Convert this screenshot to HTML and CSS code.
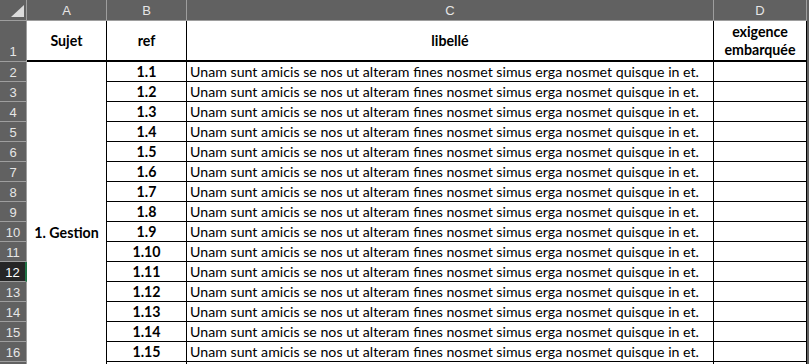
FILE: index.html
```html
<!DOCTYPE html>
<html lang="fr">
<head>
    <meta charset="UTF-8">
    <title>Exigences</title>
    <link rel="stylesheet" href="styles.css">
</head>
<body>
    <div class="sheet">
        <!-- column headers -->
        <div class="hd corner"><span class="tri"></span></div>
        <div class="hd col">A</div>
        <div class="hd col">B</div>
        <div class="hd col">C</div>
        <div class="hd col">D</div>
        <div class="hd edge"></div>

        <!-- row 1 -->
        <div class="hd row first">1</div>
        <div class="cell title a">Sujet</div>
        <div class="cell title">ref</div>
        <div class="cell title">libellé</div>
        <div class="cell title">exigence<br>embarquée</div>
        <div class="hd edge"></div>

        <!-- merged subject -->
        <div class="cell subject">1. Gestion</div>

        <div class="hd row" style="grid-row: 3">2</div><div class="cell ref" style="grid-row: 3">1.1</div><div class="cell txt" style="grid-row: 3">Unam sunt amicis se nos ut alteram fines nosmet simus erga nosmet quisque in et.</div><div class="cell" style="grid-row: 3"></div><div class="hd edge" style="grid-row: 3"></div>
        <div class="hd row" style="grid-row: 4">3</div><div class="cell ref" style="grid-row: 4">1.2</div><div class="cell txt" style="grid-row: 4">Unam sunt amicis se nos ut alteram fines nosmet simus erga nosmet quisque in et.</div><div class="cell" style="grid-row: 4"></div><div class="hd edge" style="grid-row: 4"></div>
        <div class="hd row" style="grid-row: 5">4</div><div class="cell ref" style="grid-row: 5">1.3</div><div class="cell txt" style="grid-row: 5">Unam sunt amicis se nos ut alteram fines nosmet simus erga nosmet quisque in et.</div><div class="cell" style="grid-row: 5"></div><div class="hd edge" style="grid-row: 5"></div>
        <div class="hd row" style="grid-row: 6">5</div><div class="cell ref" style="grid-row: 6">1.4</div><div class="cell txt" style="grid-row: 6">Unam sunt amicis se nos ut alteram fines nosmet simus erga nosmet quisque in et.</div><div class="cell" style="grid-row: 6"></div><div class="hd edge" style="grid-row: 6"></div>
        <div class="hd row" style="grid-row: 7">6</div><div class="cell ref" style="grid-row: 7">1.5</div><div class="cell txt" style="grid-row: 7">Unam sunt amicis se nos ut alteram fines nosmet simus erga nosmet quisque in et.</div><div class="cell" style="grid-row: 7"></div><div class="hd edge" style="grid-row: 7"></div>
        <div class="hd row" style="grid-row: 8">7</div><div class="cell ref" style="grid-row: 8">1.6</div><div class="cell txt" style="grid-row: 8">Unam sunt amicis se nos ut alteram fines nosmet simus erga nosmet quisque in et.</div><div class="cell" style="grid-row: 8"></div><div class="hd edge" style="grid-row: 8"></div>
        <div class="hd row" style="grid-row: 9">8</div><div class="cell ref" style="grid-row: 9">1.7</div><div class="cell txt" style="grid-row: 9">Unam sunt amicis se nos ut alteram fines nosmet simus erga nosmet quisque in et.</div><div class="cell" style="grid-row: 9"></div><div class="hd edge" style="grid-row: 9"></div>
        <div class="hd row" style="grid-row: 10">9</div><div class="cell ref" style="grid-row: 10">1.8</div><div class="cell txt" style="grid-row: 10">Unam sunt amicis se nos ut alteram fines nosmet simus erga nosmet quisque in et.</div><div class="cell" style="grid-row: 10"></div><div class="hd edge" style="grid-row: 10"></div>
        <div class="hd row" style="grid-row: 11">10</div><div class="cell ref" style="grid-row: 11">1.9</div><div class="cell txt" style="grid-row: 11">Unam sunt amicis se nos ut alteram fines nosmet simus erga nosmet quisque in et.</div><div class="cell" style="grid-row: 11"></div><div class="hd edge" style="grid-row: 11"></div>
        <div class="hd row" style="grid-row: 12">11</div><div class="cell ref" style="grid-row: 12">1.10</div><div class="cell txt" style="grid-row: 12">Unam sunt amicis se nos ut alteram fines nosmet simus erga nosmet quisque in et.</div><div class="cell" style="grid-row: 12"></div><div class="hd edge" style="grid-row: 12"></div>
        <div class="hd row sel" style="grid-row: 13">12</div><div class="cell ref" style="grid-row: 13">1.11</div><div class="cell txt" style="grid-row: 13">Unam sunt amicis se nos ut alteram fines nosmet simus erga nosmet quisque in et.</div><div class="cell" style="grid-row: 13"></div><div class="hd edge" style="grid-row: 13"></div>
        <div class="hd row" style="grid-row: 14">13</div><div class="cell ref" style="grid-row: 14">1.12</div><div class="cell txt" style="grid-row: 14">Unam sunt amicis se nos ut alteram fines nosmet simus erga nosmet quisque in et.</div><div class="cell" style="grid-row: 14"></div><div class="hd edge" style="grid-row: 14"></div>
        <div class="hd row" style="grid-row: 15">14</div><div class="cell ref" style="grid-row: 15">1.13</div><div class="cell txt" style="grid-row: 15">Unam sunt amicis se nos ut alteram fines nosmet simus erga nosmet quisque in et.</div><div class="cell" style="grid-row: 15"></div><div class="hd edge" style="grid-row: 15"></div>
        <div class="hd row" style="grid-row: 16">15</div><div class="cell ref" style="grid-row: 16">1.14</div><div class="cell txt" style="grid-row: 16">Unam sunt amicis se nos ut alteram fines nosmet simus erga nosmet quisque in et.</div><div class="cell" style="grid-row: 16"></div><div class="hd edge" style="grid-row: 16"></div>
        <div class="hd row" style="grid-row: 17">16</div><div class="cell ref" style="grid-row: 17">1.15</div><div class="cell txt" style="grid-row: 17">Unam sunt amicis se nos ut alteram fines nosmet simus erga nosmet quisque in et.</div><div class="cell" style="grid-row: 17"></div><div class="hd edge" style="grid-row: 17"></div>
        <div class="hd row" style="grid-row: 18"></div><div class="cell ref" style="grid-row: 18"></div><div class="cell txt" style="grid-row: 18"></div><div class="cell" style="grid-row: 18"></div><div class="hd edge" style="grid-row: 18"></div>
    </div>
</body>
</html>
```

FILE: styles.css
```css
* {
    margin: 0;
    padding: 0;
    box-sizing: border-box;
}

body {
    background: #fff;
    height: 364px;
    overflow: hidden;
    font-family: 'Lato', 'Liberation Sans', sans-serif;
}

/* Grid of the sheet */
.sheet {
    display: grid;
    grid-template-columns: 27px 80px 80px 527px 93px 2px;
    grid-template-rows: 21px 41px repeat(17, 20px);
    height: 364px;
    overflow: hidden;
}

/* Row and column headers */
.hd {
    background: #616161;
    color: #e6e6e6;
    font-family: 'Liberation Sans', sans-serif;
    font-size: 13px;
    border-right: 1px solid #9e9e9e;
    border-bottom: 1px solid #9e9e9e;
}

.corner {
    position: relative;
}

.tri {
    position: absolute;
    right: 2px;
    bottom: 3px;
    width: 0;
    height: 0;
    border-left: 13px solid transparent;
    border-bottom: 12px solid #dcdcdc;
}

.col {
    display: flex;
    align-items: center;
    justify-content: center;
}

.edge {
    border-right: none;
    border-bottom: none;
}

.row {
    grid-column: 1;
    display: flex;
    align-items: center;
    justify-content: center;
    padding-top: 1px;
}

.row.first {
    align-items: flex-end;
    padding-bottom: 2px;
}

.row.sel {
    background: #262626;
    color: #fff;
    border-right: 2px solid #1f7244;
}

/* Cells */
.cell {
    background: #fff;
    color: #000;
    font-size: 14.2px;
    border-right: 1px solid #000;
    border-bottom: 1px solid #000;
    display: flex;
    align-items: center;
    line-height: 19px;
}

.title {
    font-weight: bold;
    justify-content: center;
    text-align: center;
    border-bottom: 2px solid #000;
    line-height: 18px;
}

.subject {
    grid-column: 2;
    grid-row: 3 / span 17;
    font-weight: bold;
    justify-content: center;
    border-bottom: none;
}

.ref {
    grid-column: 3;
    font-weight: bold;
    justify-content: center;
}

.txt {
    padding-left: 3px;
    white-space: nowrap;
}
```
